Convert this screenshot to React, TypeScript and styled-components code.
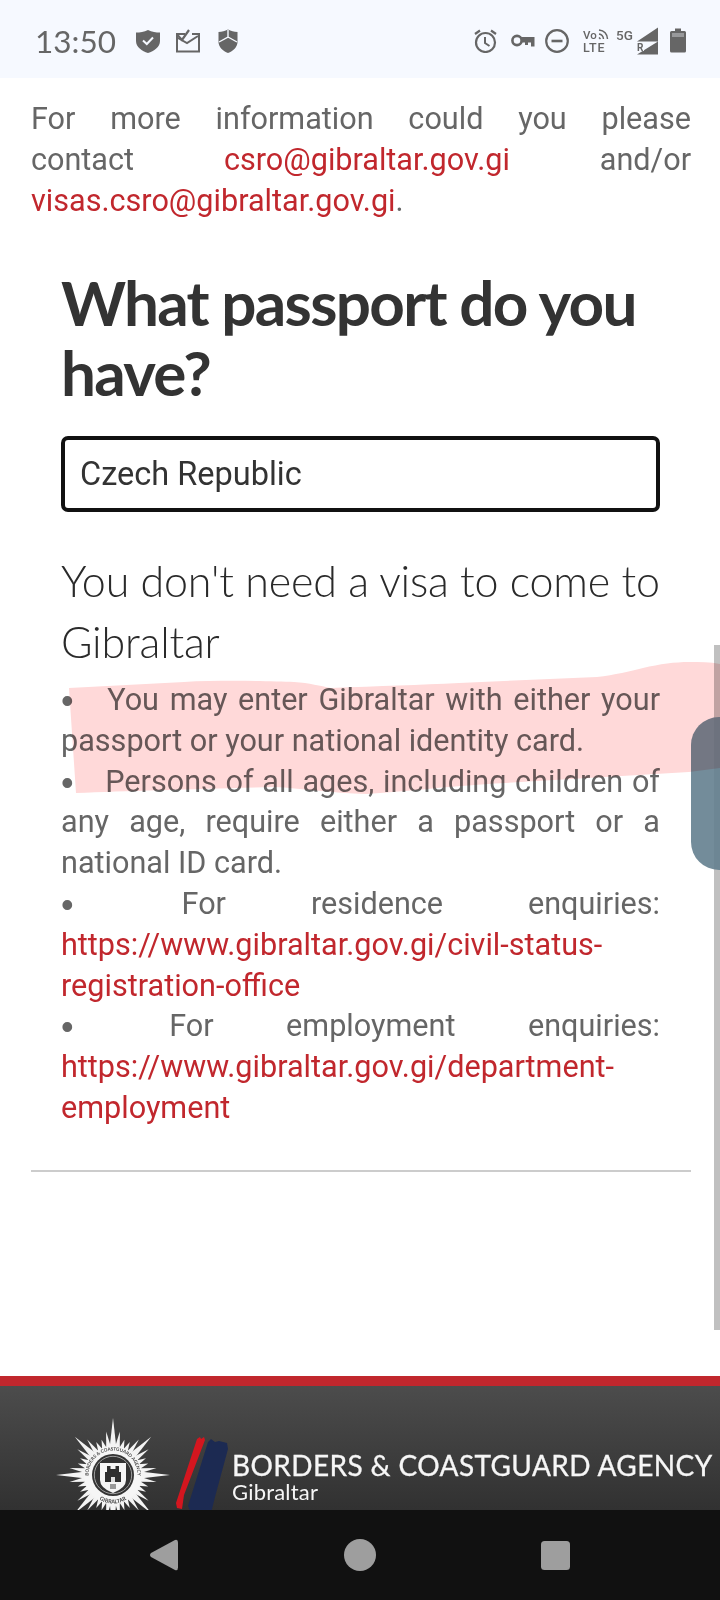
import React from "react";
import styled, { createGlobalStyle } from "styled-components";

const Global = createGlobalStyle`
  html, body { margin: 0; padding: 0; background: #fff; }
  body { font-family: Roboto, "Liberation Sans", sans-serif; }
`;

const Page = styled.div`
  position: relative;
  width: 720px;
  height: 1600px;
  overflow: hidden;
  display: flex;
  flex-direction: column;
  background: #fff;
`;

const StatusBar = styled.header`
  flex: 0 0 78px;
  box-sizing: border-box;
  background: #f6f9ff;
  display: flex;
  align-items: center;
  justify-content: space-between;
  padding: 3px 34px 0 35px;
  color: #666;
`;

const StatusGroup = styled.div`
  display: flex;
  align-items: center;
`;

const Glyph = styled.svg<{ $ml?: number }>`
  flex: none;
  display: block;
  margin-left: ${(p) => p.$ml ?? 0}px;
`;

const Clock = styled.span`
  font-family: Lato, sans-serif;
  font-size: 31.5px;
  font-weight: 400;
  color: #666;
`;

const Content = styled.main`
  flex: 1;
  display: flex;
  flex-direction: column;
  min-height: 0;
`;

const Intro = styled.p`
  margin: 20px 29px 0 31px;
  font-size: 30.6px;
  line-height: 41px;
  color: #666;
  text-align: justify;
`;

const RedLink = styled.a`
  color: #c1272d;
  text-decoration: none;
`;

const Panel = styled.section`
  margin: 46px 60px 0 61px;
`;

const Heading = styled.h1`
  margin: 0;
  font-family: Lato, sans-serif;
  font-weight: 700;
  font-size: 62px;
  line-height: 70px;
  letter-spacing: -1.7px;
  color: #333;
`;

const CountryField = styled.div`
  margin-top: 29px;
  height: 76px;
  box-sizing: border-box;
  border: 4px solid #111;
  border-radius: 7px;
  display: flex;
  align-items: center;
  padding-left: 15px;
  font-size: 32.5px;
  color: #333;
`;

const Subheading = styled.h2`
  margin: 38px 0 0;
  font-family: Lato, sans-serif;
  font-weight: 300;
  font-size: 43px;
  line-height: 61px;
  letter-spacing: -0.2px;
  color: #2a2a2a;
`;

const Notes = styled.div`
  margin-top: 8px;
  font-size: 30.6px;
  line-height: 40.8px;
  color: #666;
  text-align: justify;
`;

const Bullet = styled.span`
  font-family: "Liberation Sans", sans-serif;
  font-size: 36px;
  line-height: 0;
  margin-right: 23px;
  vertical-align: -3px;
`;

const Rule = styled.hr`
  margin: 41px 29px 0 31px;
  border: 0;
  border-top: 2px solid #ccc;
`;

const Footer = styled.footer`
  margin-top: auto;
  flex: 0 0 124px;
  border-top: 10px solid #c1272d;
  background: linear-gradient(#4c4c4c, #313131);
  overflow: hidden;
  display: flex;
  align-items: flex-start;
  padding: 0 0 0 55px;
`;

const EmblemSvg = styled.svg`
  flex: none;
  margin-top: 31px;
`;

const SlashesSvg = styled.svg`
  flex: none;
  margin-top: 51px;
  margin-left: 4px;
`;

const Brand = styled.div`
  margin: 63px 0 0 -3px;
  color: #f6f6f6;
  white-space: nowrap;
  font-family: Lato, sans-serif;
`;

const BrandName = styled.div`
  font-size: 28px;
  line-height: 32px;
  letter-spacing: 0.4px;
  -webkit-text-stroke: 0.3px #f6f6f6;
`;

const BrandPlace = styled.div`
  font-size: 22px;
  line-height: 24px;
  margin-top: -1px;
  letter-spacing: 0.2px;
`;

const NavBar = styled.nav`
  flex: 0 0 90px;
  background: #111;
  display: flex;
  align-items: center;
  justify-content: center;
  gap: 165px;
  padding-right: 2px;
`;

const Track = styled.div`
  position: absolute;
  right: 0;
  top: 645px;
  width: 6px;
  height: 685px;
  background: #c0c0c0;
`;

const ScrollHandle = styled.div`
  position: absolute;
  right: 0;
  top: 717px;
  width: 29px;
  height: 153px;
  border-radius: 28px 0 0 28px;
  background: rgba(100, 128, 143, 0.9);
`;

const Scribble = styled.svg`
  position: absolute;
  left: 0;
  top: 660px;
  mix-blend-mode: multiply;
  pointer-events: none;
`;

const rays = Array.from({ length: 40 }, (_, i) => {
  const a = (i / 40) * 360;
  const major = i % 5 === 0;
  const m = i % 10 === 0 ? 57 : major ? 54 : i % 5 === 1 || i % 5 === 4 ? 44 : 37;
  const w = major ? 3.4 : 2.6;
  return { a, m, w };
});

function Emblem() {
  return (
    <EmblemSvg width="116" height="116" viewBox="-58 -58 116 116">
      <defs>
        <path id="ring-top" d="M-24.5 0 A24.5 24.5 0 0 1 24.5 0" />
        <path id="ring-bottom" d="M-25.5 3 A25.5 25.5 0 0 0 25.5 3" />
      </defs>
      {rays.map((r) => (
        <path
          key={r.a}
          d={`M${-r.w} -27 L0 ${-r.m} L${r.w} -27 Z`}
          fill="#f4f4f4"
          transform={`rotate(${r.a})`}
        />
      ))}
      <circle r="29" fill="#f6f6f6" />
      <text fontFamily="Lato, sans-serif" fontSize="4.6" fontWeight="700" fill="#444">
        <textPath href="#ring-top" startOffset="50%" textAnchor="middle">BORDERS &amp; COASTGUARD AGENCY</textPath>
      </text>
      <text fontFamily="Lato, sans-serif" fontSize="5.4" fontWeight="700" fill="#444">
        <textPath href="#ring-bottom" startOffset="50%" textAnchor="middle">GIBRALTAR</textPath>
      </text>
      <circle r="21" fill="#333" />
      <circle r="18.7" fill="none" stroke="#aaa" strokeWidth="0.9" />
      <path d="M-13 -12 H13 V5 Q13 13 0 18 Q-13 13 -13 5 Z" fill="#f6f6f6" />
      <path d="M-8 -3 H-6 V-9 H-2.5 V-6 H2.5 V-9 H6 V-3 H8 V7 H-8 Z" fill="#2e2e2e" />
      <path d="M-2 2 H2 V7 H-2 Z" fill="#ddd" />
      <path d="M-3 9 H3 V14 H-3 Z" fill="#999" />
    </EmblemSvg>
  );
}

function Slashes() {
  return (
    <SlashesSvg width="60" height="76" viewBox="0 0 60 76">
      <path d="M22 2 L25 0 L26 2 L29 0 L30 3 L9 58 L7 72 L2 71 L1 66 Z" fill="#d4161f" />
      <path d="M33 5 L36 2 L40 5 L44 4 L52 6 L53 12 L40 60 L36 76 L16 76 L13 69 Z" fill="#1c2a52" />
    </SlashesSvg>
  );
}

export default function App() {
  return (
    <Page>
      <Global />
      <StatusBar>
        <StatusGroup>
          <Clock>13:50</Clock>
          <Glyph $ml={20} width="24" height="24" viewBox="0 0 24 24">
            <path d="M12 1 C16 3 20 3.5 24 3.5 V12 C24 18 18 22 12 24 C6 22 0 18 0 12 V3.5 C4 3.5 8 3 12 1 Z" fill="#666" />
            <path d="M7 11.5 L10.8 15 L17 8.5" fill="none" stroke="#f6f9ff" strokeWidth="2" />
          </Glyph>
          <Glyph $ml={16} width="24" height="24" viewBox="0 0 24 24">
            <path d="M9 5 H1 V22.5 H23 V5 H16 M2 9 L11 14 L22 7" fill="none" stroke="#666" strokeWidth="2" />
            <path d="M1.5 6 L6 11 L13 1" fill="none" stroke="#666" strokeWidth="2.2" />
          </Glyph>
          <Glyph $ml={18} width="20" height="24" viewBox="0 0 20 24">
            <path d="M10 0.5 C13 2 16 3 19.5 3 V13 C19.5 18 15 22 10 24 C5 22 0.5 18 0.5 13 V3 C4 3 7 2 10 0.5 Z" fill="#666" />
            <path d="M10 1 V8 L1 13 M10 8 L19 13" fill="none" stroke="#f6f9ff" strokeWidth="1.4" />
          </Glyph>
        </StatusGroup>
        <StatusGroup>
          <Glyph width="23" height="24" viewBox="0 0 23 24">
            <circle cx="11.5" cy="13.5" r="9.5" fill="none" stroke="#666" strokeWidth="2.2" />
            <path d="M11 8 V14 L15.5 17" fill="none" stroke="#666" strokeWidth="2" />
            <path d="M1 5 L6 1.5 M22 5 L17 1.5" fill="none" stroke="#666" strokeWidth="2.2" />
          </Glyph>
          <Glyph $ml={14} width="24" height="14" viewBox="0 0 24 14">
            <circle cx="6" cy="6.5" r="4.6" fill="none" stroke="#666" strokeWidth="2.6" />
            <path d="M10 3 H23.5 V12.5 H20 V8.5 H17 V11 H14 V8.5 H10 Z" fill="#666" />
          </Glyph>
          <Glyph $ml={10} width="24" height="24" viewBox="0 0 24 24">
            <circle cx="12" cy="12" r="10.8" fill="none" stroke="#666" strokeWidth="2.2" />
            <path d="M6.5 12 H17.5" stroke="#666" strokeWidth="2.6" />
          </Glyph>
          <Glyph $ml={14} width="26" height="26" viewBox="0 0 26 26">
            <text x="0" y="10.5" fontFamily="Roboto, sans-serif" fontSize="11.5" fontWeight="500" fill="#666">Vo</text>
            <path d="M16 2 Q24 3 24.5 11 M16 6 Q20 6.5 20.5 11 M16 9.5 L17.5 11" fill="none" stroke="#666" strokeWidth="1.5" />
            <text x="0" y="24" fontFamily="Roboto, sans-serif" fontSize="12.5" fontWeight="500" letterSpacing="0.8" fill="#666">LTE</text>
          </Glyph>
          <Glyph $ml={7} width="44" height="28" viewBox="0 0 44 28">
            <text x="0" y="12.5" fontFamily="Roboto, sans-serif" fontSize="13.5" fontWeight="500" fill="#666">5G</text>
            <path d="M21 14.5 L42 0.5 V14.5 Z M21 27.5 L42 14.5 V27.5 Z" fill="#666" />
            <path d="M21 15.5 H28 V24 H21 Z" fill="#f6f9ff" />
            <text x="21" y="23.5" fontFamily="Roboto, sans-serif" fontSize="10" fontWeight="700" fill="#666">R</text>
          </Glyph>
          <Glyph $ml={10} width="16" height="25" viewBox="0 0 16 25">
            <path d="M5 0.5 H11 V3 H14.5 Q16 3 16 4.5 V23 Q16 24.5 14.5 24.5 H1.5 Q0 24.5 0 23 V4.5 Q0 3 1.5 3 H5 Z" fill="#666" />
            <path d="M2 5 H14 V9 H2 Z" fill="#f6f9ff" opacity="0.35" />
          </Glyph>
        </StatusGroup>
      </StatusBar>

      <Content>
        <Intro>
          For more information could you please contact&nbsp;<RedLink>csro@gibraltar.gov.gi</RedLink> and/or{" "}
          <RedLink>visas.csro@gibraltar.gov.gi</RedLink>.
        </Intro>

        <Panel>
          <Heading>What passport do you have?</Heading>
          <CountryField>Czech Republic</CountryField>
          <Subheading>You don't need a visa to come to Gibraltar</Subheading>
          <Notes>
            <Bullet>•</Bullet> You may enter Gibraltar with either your passport or your national identity card.
            <br />
            <Bullet>•</Bullet> Persons of all ages, including children of any age, require either a passport or a national ID card.
            <br />
            <Bullet>•</Bullet> For residence enquiries:{" "}
            <RedLink>https://www.gibraltar.gov.gi/civil-status-registration-office</RedLink>
            <br />
            <Bullet>•</Bullet> For employment enquiries:{" "}
            <RedLink>https://www.gibraltar.gov.gi/department-employment</RedLink>
          </Notes>
        </Panel>

        <Rule />

        <Footer>
          <Emblem />
          <Slashes />
          <Brand>
            <BrandName>BORDERS &amp; COASTGUARD AGENCY</BrandName>
            <BrandPlace>Gibraltar</BrandPlace>
          </Brand>
        </Footer>
      </Content>

      <NavBar>
        <svg width="30" height="32" viewBox="0 0 30 32">
          <path d="M26 1 Q29 0 29 3.5 V28.5 Q29 32 26 31 L2 18 Q0 16 2 14 Z" fill="#9e9e9e" />
        </svg>
        <svg width="32" height="32" viewBox="0 0 32 32">
          <circle cx="16" cy="16" r="16" fill="#9e9e9e" />
        </svg>
        <svg width="29" height="29" viewBox="0 0 29 29">
          <rect width="29" height="29" rx="3.5" fill="#9e9e9e" />
        </svg>
      </NavBar>

      <Track />
      <ScrollHandle />
      <Scribble width="720" height="150" viewBox="0 660 720 150">
        <path
          d="M69 688 L184 682 C220 680 270 681 294 682 C310 683 320 686 331 688 C380 686 420 685 459 683 L597 677 C615 675 630 671 643 668 C660 664 675 662 689 662 C700 662 710 662 720 664 V768 L689 772 L505 783 C450 786 400 792 367 794 C330 793 300 788 275 787 C200 789 130 791 76 793 Z"
          fill="#ffd9d9"
        />
      </Scribble>
    </Page>
  );
}
